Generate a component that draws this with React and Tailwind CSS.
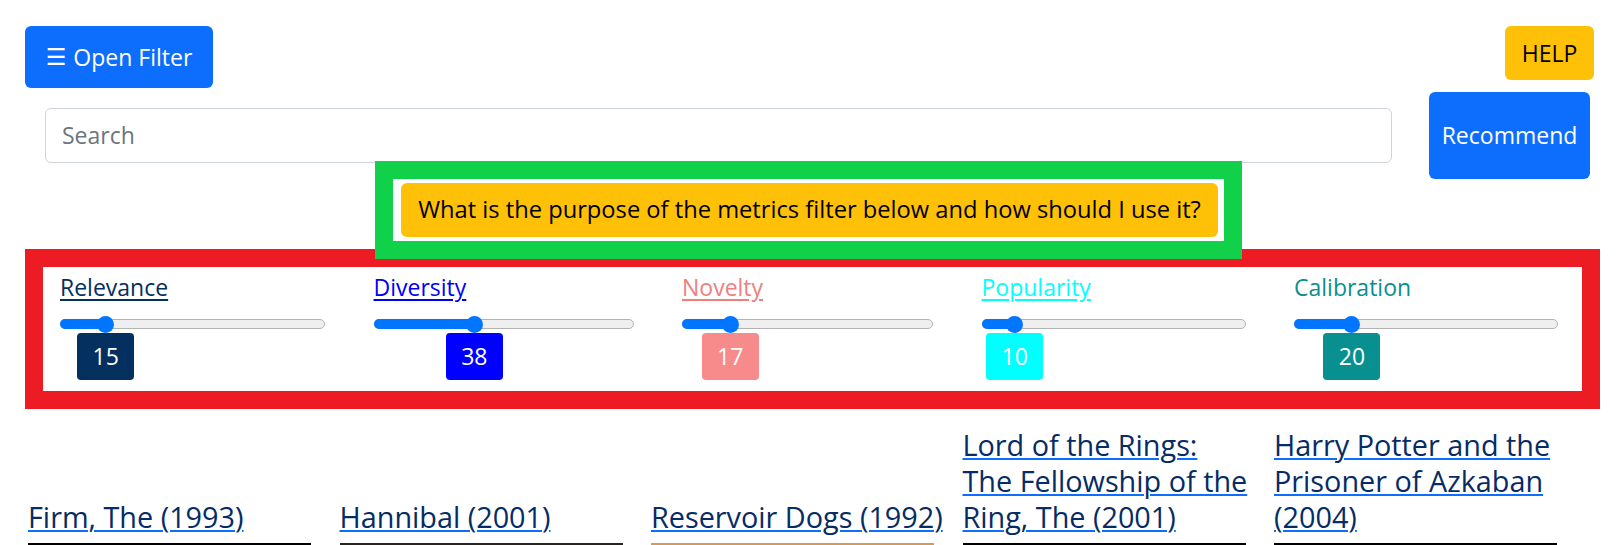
import React from "react";

const metrics = [
  { name: "Relevance", value: 15, width: 265, wClass: "w-[265px]", label: "text-[#03305f] underline decoration-[#03305f]", badge: "bg-[#03305f]" },
  { name: "Diversity", value: 38, width: 260, wClass: "w-[260px]", label: "text-[#0000ff] underline decoration-[#0000ff]", badge: "bg-[#0000ff]" },
  { name: "Novelty", value: 17, width: 251, wClass: "w-[251px]", label: "text-[#f08080] underline decoration-[#f08080]", badge: "bg-[#f78a8a]" },
  { name: "Popularity", value: 10, width: 264, wClass: "w-[264px]", label: "text-[#00ffff] underline decoration-[#00ffff]", badge: "bg-[#00ffff]" },
  { name: "Calibration", value: 20, width: 264, wClass: "w-[264px]", label: "text-[#088f8f]", badge: "bg-[#088f8f]" },
];

const movies = [
  { lines: ["Firm, The (1993)"], poster: "bg-[#000000]" },
  { lines: ["Hannibal (2001)"], poster: "bg-[#2a2420]" },
  { lines: ["Reservoir Dogs (1992)"], poster: "bg-[#d49a5c]" },
  { lines: ["Lord of the Rings:", "The Fellowship of the", "Ring, The (2001)"], poster: "bg-[#000000]" },
  { lines: ["Harry Potter and the", "Prisoner of Azkaban", "(2004)"], poster: "bg-[#000000]" },
];

function Slider({ value, width }) {
  const center = 8.5 + (value / 100) * (width - 17);
  return (
    <div className="relative h-[17px]">
      <div className="absolute left-0 right-0 top-[3.5px] h-[10px] rounded-full border border-[#b2b2b2] bg-[#efefef]" />
      <div
        className="absolute left-0 top-[3.5px] h-[10px] rounded-full bg-[#0075ff]"
        style={{ width: center }}
      />
      <div
        className="absolute top-0 h-[17px] w-[17px] rounded-full bg-[#0075ff]"
        style={{ left: center - 8.5 }}
      />
    </div>
  );
}

function Metric({ m }) {
  const center = 8.5 + (m.value / 100) * (m.width - 17);
  return (
    <div className={`${m.wClass} shrink-0`}>
      <div className={`text-[23px] leading-[34px] underline-offset-[3px] ${m.label}`}>{m.name}</div>
      <div className="mt-[11.5px]">
        <Slider value={m.value} width={m.width} />
      </div>
      <div
        className={`flex h-[47px] w-[57px] items-center justify-center rounded-[4px] text-[23px] text-white ${m.badge}`}
        style={{ marginLeft: center - 28.5 }}
      >
        {m.value}
      </div>
    </div>
  );
}

export default function App() {
  return (
    <div className="min-h-[545px] bg-white px-[25px] font-['Open_Sans',sans-serif] text-[#212529]">
      {/* Row 1 */}
      <div className="flex items-start justify-between pt-[26px]">
        <button className="flex h-[62px] w-[188px] items-center justify-center rounded-md bg-[#0d6efd] text-[23px] text-white">
          <span className="font-['DejaVu_Sans',sans-serif]">☰</span>
          <span className="ml-[7px]">Open Filter</span>
        </button>
        <button className="mr-[5px] flex h-[54px] w-[89px] items-center justify-center rounded-md bg-[#ffc107] text-[23px] text-black">
          HELP
        </button>
      </div>

      {/* Row 2 */}
      <div className="mt-[4px] flex h-[87px] items-center">
        <div className="ml-[20px] flex h-[55px] flex-1 items-center rounded-md border border-[#ced4da] bg-white pl-[16px] text-[23px] text-[#6c757d]">
          Search
        </div>
        <button className="ml-[37px] mr-[9px] flex h-[87px] w-[161px] items-center justify-center rounded-md bg-[#0d6efd] text-[23px] text-white">
          Recommend
        </button>
      </div>

      {/* Question (green highlight) */}
      <div className="relative z-10 ml-[368px] w-[831px] bg-white py-[4px] pl-[8px] pr-[6px] outline-[18px] outline-solid outline-[#11d04a]">
        <button className="flex h-[54px] w-full items-center justify-center rounded-md bg-[#ffc107] text-[23.7px] text-black">
          What is the purpose of the metrics filter below and how should I use it?
        </button>
      </div>

      {/* Metrics (red highlight) */}
      <div className="ml-[18px] mr-[17px] mt-[26px] flex gap-[48.5px] bg-white pb-[11.5px] pl-[17px] pt-[3px] outline-[18px] outline-solid outline-[#ed1c24]">
        {metrics.map((m) => (
          <Metric key={m.name} m={m} />
        ))}
      </div>

      {/* Movies */}
      <div className="ml-[3px] mt-[36px] flex items-end gap-[13.5px]">
        {movies.map((mv, i) => (
          <div key={i} className="w-[298px] shrink-0">
            <h5 className="mb-[8px] text-[28.8px] font-medium leading-[36px] text-[#052c65]">
              <a className="cursor-pointer underline decoration-[#0d6efd] decoration-2 underline-offset-[2px]">
                {mv.lines.map((l, j) => (
                  <React.Fragment key={j}>
                    <span className="whitespace-nowrap">{l}</span>
                    {j < mv.lines.length - 1 && <br />}
                  </React.Fragment>
                ))}
              </a>
            </h5>
            <div className={`h-[420px] w-[283px] ${mv.poster}`} />
          </div>
        ))}
      </div>
    </div>
  );
}
